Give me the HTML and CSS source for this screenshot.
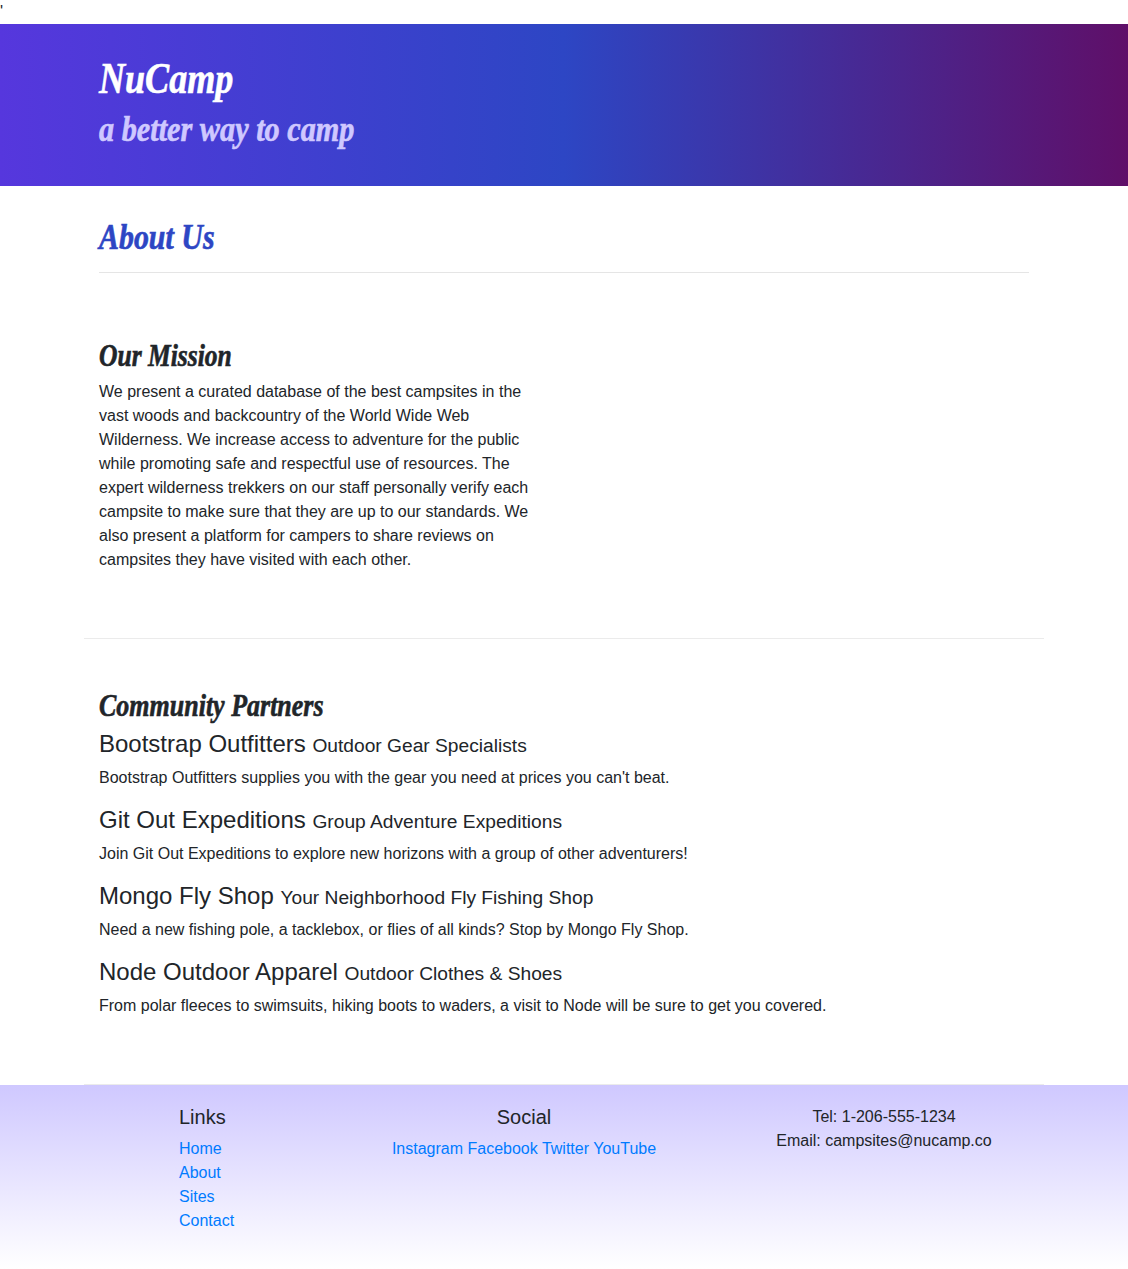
FILE: index.html
```html
<!DOCTYPE html>
<html lang="en">
<head>
<meta charset="utf-8">
<title>NuCamp: About Us</title>
<link rel="stylesheet" href="styles.css">
</head>
<body>
'
<header class="banner">
  <div class="container">
    <h1 class="script"><span class="brand">NuCamp</span></h1>
    <h2 class="script tagline"><span class="slogan">a better way to camp</span></h2>
  </div>
</header>
<main class="container">
  <div class="page-title">
    <h2 class="script"><span class="about">About Us</span></h2>
    <hr>
  </div>
  <section class="row-content">
    <div class="half">
      <h3 class="script"><span class="mission">Our Mission</span></h3>
      <p>We present a curated database of the best campsites in the vast woods and backcountry of the World Wide Web Wilderness. We increase access to adventure for the public while promoting safe and respectful use of resources. The expert wilderness trekkers on our staff personally verify each campsite to make sure that they are up to our standards. We also present a platform for campers to share reviews on campsites they have visited with each other.</p>
    </div>
  </section>
  <section class="row-content">
    <h3 class="script"><span class="partners">Community Partners</span></h3>
    <h4>Bootstrap Outfitters <small>Outdoor Gear Specialists</small></h4>
    <p>Bootstrap Outfitters supplies you with the gear you need at prices you can't beat.</p>
    <h4>Git Out Expeditions <small>Group Adventure Expeditions</small></h4>
    <p>Join Git Out Expeditions to explore new horizons with a group of other adventurers!</p>
    <h4>Mongo Fly Shop <small>Your Neighborhood Fly Fishing Shop</small></h4>
    <p>Need a new fishing pole, a tacklebox, or flies of all kinds? Stop by Mongo Fly Shop.</p>
    <h4>Node Outdoor Apparel <small>Outdoor Clothes &amp; Shoes</small></h4>
    <p>From polar fleeces to swimsuits, hiking boots to waders, a visit to Node will be sure to get you covered.</p>
  </section>
</main>
<footer class="site-footer">
  <div class="container footer-grid">
    <div class="links">
      <h5>Links</h5>
      <ul>
        <li><a href="#">Home</a></li>
        <li><a href="#">About</a></li>
        <li><a href="#">Sites</a></li>
        <li><a href="#">Contact</a></li>
      </ul>
    </div>
    <div class="centered">
      <h5>Social</h5>
      <a href="#">Instagram</a> <a href="#">Facebook</a> <a href="#">Twitter</a> <a href="#">YouTube</a>
    </div>
    <div class="centered">Tel: 1-206-555-1234<br>Email: campsites@nucamp.co</div>
  </div>
</footer>
</body>
</html>
```
FILE: styles.css
```css
* { box-sizing: border-box; }
body {
  margin: 0;
  font: 16px/24px "Liberation Sans", Arial, sans-serif;
  color: #212529;
  background: #fff;
}
h1, h2, h3, h4, h5 { margin: 0 0 8px; font-weight: 400; }
h1 { font-size: 40px; line-height: 48px; }
h2 { font-size: 32px; line-height: 38px; }
h3 { font-size: 28px; line-height: 33px; }
h4 { font-size: 24px; line-height: 28px; }
h5 { font-size: 20px; line-height: 24px; }
small { font-size: 80%; line-height: 1; }
p { margin: 0 0 16px; }
a { color: #007bff; text-decoration: none; }
hr { margin: 16px 0; border: 0; border-top: 1px solid rgba(0, 0, 0, .1); }

.container { width: 960px; margin: 0 auto; }

.script {
  font-family: "Liberation Serif", serif;
  font-weight: 700;
  font-style: italic;
  white-space: nowrap;
  -webkit-text-stroke: .6px currentColor;
}
.script span { display: block; width: max-content; font-size: 1.1em; transform-origin: left center; }
.script .brand { transform: translateY(1px) scaleX(.82); }
.script .slogan { transform: translateY(1px) scaleX(.86); }
.script .about { transform: translateY(1px) scaleX(.85); }
.script .mission { transform: translateY(1px) scaleX(.83); }
.script .partners { transform: translateY(1px) scaleX(.844); }

.banner {
  padding: 30px 0;
  color: #fff;
  background: linear-gradient(to right, #5637dd 0%, #2d46c4 50%, #5f0f68 100%);
}
.banner .container { padding: 0 15px; display: flow-root; }
.banner .tagline { color: #cfc8ff; }

.page-title { padding: 32px 15px 0; display: flow-root; }
.page-title h2 { margin-bottom: 16px; color: #2d46c4; }
.row-content { padding: 50px 15px; border-bottom: 1px solid #ebebeb; display: flow-root; }
.half { width: 450px; }

.site-footer { padding: 20px 0; background: linear-gradient(to bottom, #cfc8ff, #fff); }
.footer-grid { display: grid; grid-template-columns: 160px 400px 320px; padding-left: 80px; }
.links { padding-left: 15px; }
.links ul { list-style: none; margin: 0 0 16px; padding: 0; }
.centered { text-align: center; }
```
